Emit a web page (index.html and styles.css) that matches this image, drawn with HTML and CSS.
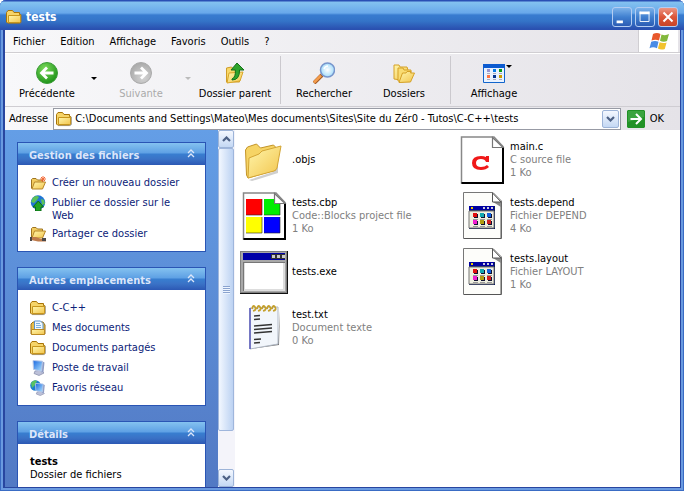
FILE: index.html
```html
<!DOCTYPE html>
<html lang="fr">
<head>
<meta charset="utf-8">
<title>tests</title>
<link rel="stylesheet" href="styles.css">
</head>
<body>
<svg class="defs" aria-hidden="true">
  <defs>
    <linearGradient id="gold" x1="0" y1="0" x2="1" y2="1"><stop offset="0" stop-color="#fff6ac"/><stop offset="1" stop-color="#f2c44c"/></linearGradient>
    <linearGradient id="screen" x1="0" y1="0" x2="1" y2="1"><stop offset="0" stop-color="#1565e0"/><stop offset="1" stop-color="#b4e6ff"/></linearGradient>
    <radialGradient id="green" cx=".4" cy=".3" r=".8"><stop offset="0" stop-color="#7cda5c"/><stop offset="1" stop-color="#128a10"/></radialGradient>
    <radialGradient id="grey" cx=".4" cy=".3" r=".8"><stop offset="0" stop-color="#d4d4d4"/><stop offset="1" stop-color="#a4a4a4"/></radialGradient>
    <radialGradient id="lens"><stop offset="0" stop-color="#fff"/><stop offset="1" stop-color="#a4dcfa"/></radialGradient>
    <symbol id="folder" viewBox="0 0 16 16">
      <path d="M2 14.6h12.4l1-1V6" fill="none" stroke="#777" stroke-opacity=".6"/>
      <path d="M.5 3.5 2 1.5h4.5L8 3.5h5.5v2h1.2V13l-1 1H1.5l-1-1z" fill="#f6d468" stroke="#a87408"/>
      <path d="M2.5 6.5h12v6l-1 1h-11z" fill="url(#gold)" stroke="#c8961c"/>
    </symbol>
    <symbol id="open" viewBox="0 0 16 16">
      <path d="M1.5 13.5v-9l1-1H6l1.5 1.5h5v2" fill="#f2cc60" stroke="#9e7420"/>
      <path d="m2 14 2.5-7h11l-3 7z" fill="url(#gold)" stroke="#b58528"/>
    </symbol>
    <symbol id="pc" viewBox="0 0 16 16">
      <path d="m5 11 6-1 3 3-5 2.500-5-2z" fill="#bcc0d8" stroke="#8388a6" stroke-width=".7"/>
      <path d="m3 1 9.500.5 2 1-1 9.500-2 .5z" fill="#8e9cc4"/>
      <path d="m3 .5 9.500.7-1 10-8-1.800z" fill="url(#screen)" stroke="#b8c8e8"/>
    </symbol>
    <symbol id="chevrons" viewBox="0 0 8 9"><path d="m1 4 3-3 3 3M1 8l3-3 3 3" fill="none" stroke="currentColor" stroke-width="1.3"/></symbol>
    <symbol id="chev" viewBox="0 0 9 6"><path d="M1 1 4.5 4.5 8 1" fill="none" stroke="#4d6185" stroke-width="2.2"/></symbol>
    <symbol id="arrow" viewBox="0 0 22 22">
      <circle cx="11" cy="11" r="10.5" stroke-width="1"/>
      <path d="M17.5 11H6M11 5.5 5.5 11l5.5 5.500" fill="none" stroke="#fff" stroke-width="2.8"/>
    </symbol>
    <symbol id="sheet" viewBox="0 0 48 48">
      <path d="M6 .5h29L43.500 9v37.500H5.500V.5z" fill="#fdfdfa" stroke="#777"/>
      <path d="M43 10v36.500H6" fill="none" stroke="#555"/>
      <path d="M35 1v9h8v5l-8-5z" fill="#8a8a8a"/>
      <path d="M34.500 1v9H43z" fill="#fff" stroke="#555"/>
      <path d="M11 14h26v23H11z" fill="#0a1b55"/><path d="M11 14h25v4H11z" fill="#0000a0"/><path d="M11 19h25v17H11z" fill="#efefdf" stroke="#777"/>
      <path d="M13 15h2v2h-2z" fill="#ec0"/><path d="M25 15h2v2h-2zm4 0h2v2h-2zm4 0h2v2h-2z" fill="#ccd"/>
      <path d="M16 22h4v4h-4zm7 0h4v4h-4zm7 0h4v4h-4zM16 29h4v4h-4zm7 0h4v4h-4zm7 0h4v4h-4z" fill="#101030"/>
      <path d="M15 21h4v4h-4z" fill="#e01010"/><path d="M22 21h4v4h-4z" fill="#10a8b0"/><path d="M29 21h4v4h-4z" fill="#1060e0"/>
      <path d="M15 28h4v4h-4z" fill="#f020d0"/><path d="M22 28h4v4h-4z" fill="#b09c10"/><path d="M29 28h4v4h-4z" fill="#d02020"/>
      <path d="M15 27.500h5m2 0h5m2 0h5M15 34.500h5m2 0h5m2 0h5" stroke="#999"/>
    </symbol>
    <symbol id="page" viewBox="0 0 48 48">
      <path d="M3.500 1H36l9 9.500V47H3.500z" fill="#fff" stroke="#888" stroke-width="1.500"/>
      <path d="M45 11v36H3.500" fill="none" stroke="#000" stroke-width="2"/>
      <path d="M34.500 1.500v10H45z" fill="#fff" stroke="#777" stroke-width="1.200"/>
    </symbol>
  </defs>
</svg>

<div class="window">
  <header class="titlebar">
    <svg class="i16"><use href="#folder"/></svg>
    <h1>tests</h1>
    <button class="winbtn" aria-label="Réduire"><svg viewBox="0 0 20 20"><path d="M4 14h7v3H4z" fill="#fff"/></svg></button>
    <button class="winbtn" aria-label="Agrandir"><svg viewBox="0 0 20 20"><path d="M4.500 4v11h10V4" fill="none" stroke="#fff"/><path d="M4 4h11v3H4z" fill="#fff"/></svg></button>
    <button class="winbtn close" aria-label="Fermer"><svg viewBox="0 0 20 20"><path d="m5 5 10 10M15 5 5 15" stroke="#fff" stroke-width="2.200"/></svg></button>
  </header>

  <nav class="menubar">
    <button>Fichier</button><button>Edition</button><button>Affichage</button><button>Favoris</button><button>Outils</button><button>?</button>
    <span class="flag"><svg viewBox="0 0 20 19">
      <path d="M4 2q4-2 7.500 0L10 8.500Q6.500 7 2.500 8.500z" fill="#e8582c"/>
      <path d="M12.500 2.500q4 1.500 7.500-.5l-2 7q-3.500 1.500-7-.3z" fill="#83b83c"/>
      <path d="M2.200 9.700q4-1.500 7.300 0L8 16.200q-4-1.700-7.500 0z" fill="#4a8be4"/>
      <path d="M10.600 10.200q3.600 1.500 7 .2l-1.800 6.500q-3.500 1.500-6.900-.3z" fill="#f2c22e"/>
    </svg></span>
  </nav>

  <div class="toolbar">
    <button class="tool"><svg class="i22"><use href="#arrow" fill="url(#green)" stroke="#3c9c38"/></svg>Précédente</button>
    <button class="drop" aria-label="Historique précédent"><i></i></button>
    <button class="tool off" disabled><svg class="i22"><use href="#arrow" fill="url(#grey)" stroke="#aaa" transform="rotate(180 11 11)"/></svg>Suivante</button>
    <button class="drop off" aria-label="Historique suivant" disabled><i></i></button>
    <button class="tool"><svg class="i22" viewBox="0 0 22 22">
      <path d="M2.500 20V6l5-1 2 2h6v13z" fill="#f8d868" stroke="#cf9d28"/>
      <path d="m3 21 2-10 14-1-3 9z" fill="url(#gold)" stroke="#d9a62a"/>
      <path d="M8 17q4-2 3.300-9H7L13 1l7 7h-4.500q.3 10-7.500 10z" fill="#2fa42c" stroke="#14701a"/>
    </svg>Dossier parent</button>
    <span class="sep"></span>
    <button class="tool wide"><svg class="i22" viewBox="0 0 22 22">
      <path d="m1 21 8-8" stroke="#a35c24" stroke-width="4"/><path d="m1 20.500 7-7" stroke="#f49c4c" stroke-width="2.500"/>
      <circle cx="14.500" cy="8" r="7" fill="url(#lens)" stroke="#7795cc" stroke-width="1.500"/><path d="M11 7q1-3 4-3" fill="none" stroke="#fff" stroke-width="1.500"/>
    </svg>Rechercher</button>
    <button class="tool wide"><svg class="i22" viewBox="0 0 22 22">
      <path d="M1 17V3h5l1 2h7l1 3-7 10z" fill="url(#gold)" stroke="#d5a127"/>
      <path d="M5 19V6h5l1 2h7v6l-8 6z" fill="#f9dc72" stroke="#d5a127"/>
      <path d="M6 20.500 9.500 11H13l1-1.500h4L17.500 11H21.500l-4 9z" fill="url(#gold)" stroke="#d5a127"/>
    </svg>Dossiers</button>
    <span class="sep"></span>
    <button class="tool wide view"><svg class="i22" viewBox="0 0 22 22">
      <path d="M.5 3.500h21v17H.5z" fill="#e9f2ff" stroke="#1165cc"/><path d="M0 2h22v4H0z" fill="#0c5bd0"/>
      <path d="M4 7h3v3H4z" fill="#9895cf"/><path d="M10 7h3v3h-3z" fill="#087be5"/><path d="M16 7h3v3h-3z" fill="#0c9914"/>
      <path d="M4 13h3v3H4z" fill="#ff7441"/><path d="M10 13h3v3h-3z" fill="#05338f"/><path d="M16 13h3v3h-3z" fill="#cf9b00"/>
      <path d="M4 11.500h3m3 0h3m3 0h3M4 17.500h3m3 0h3m3 0h3" stroke="#aab"/>
    </svg>Affichage<i></i></button>
  </div>

  <form class="address">
    <label for="addr">Adresse</label>
    <div class="combo">
      <svg class="i16"><use href="#folder"/></svg>
      <input id="addr" type="text" value="C:\Documents and Settings\Mateo\Mes documents\Sites\Site du Zér0 - Tutos\C-C++\tests">
      <button type="button" class="bluebtn" aria-label="Dérouler"><svg class="chev"><use href="#chev"/></svg></button>
    </div>
    <button type="button" class="go"><svg viewBox="0 0 18 18"><path d="M0 1 1 0h16l1 1v16l-1 1H1l-1-1z" fill="#219126"/><path d="M1 1h16v6L1 12z" fill="#55b858" opacity=".5"/><path d="M3.500 9H14M9 4l5 5-5 5" fill="none" stroke="#fff" stroke-width="2"/></svg>OK</button>
  </form>

  <div class="body">
    <aside class="side">
      <section class="panel">
        <h2>Gestion des fichiers<svg class="chevrons"><use href="#chevrons"/></svg></h2>
        <ul>
          <li><svg class="i16" viewBox="0 0 16 16"><use href="#open"/><path d="M13 1v6m-3-3h6m-5-2 4 4m0-4-4 4" stroke="#f26a38"/></svg><a href="#">Créer un nouveau dossier</a></li>
          <li><svg class="i16" viewBox="0 0 16 16"><circle cx="8" cy="7.500" r="7.200" fill="#2075d4"/><path d="M3 2.500Q7 0 9 2L7 5 4 8 1 7zM11 4l3 1 1 4-3 1z" fill="#5cc258"/><path d="M5.500 16v-4H3l5.300-6 5.200 6H11v4z" fill="#22a422" stroke="#096c18"/></svg><a href="#">Publier ce dossier sur le Web</a></li>
          <li><svg class="i16" viewBox="0 0 16 16"><use href="#open" y="-2"/><path d="M1 11h5l5 2h5v2.500H8L1 14z" fill="#be7a4a"/><path d="M0 11h2v4H0zm12 1h4v3h-4z" fill="#4c4847"/></svg><a href="#">Partager ce dossier</a></li>
        </ul>
      </section>
      <section class="panel">
        <h2>Autres emplacements<svg class="chevrons"><use href="#chevrons"/></svg></h2>
        <ul>
          <li><svg class="i16"><use href="#folder"/></svg><a href="#">C-C++</a></li>
          <li><svg class="i16" viewBox="0 0 16 16"><path d="M1 14V4l2-2h10l2 3v9z" fill="#e8bf4a" stroke="#9b711c"/><path d="M4.500 1h6L13 3.500V10H4.500z" fill="#eef7ff" stroke="#5892ce"/><path d="M6 3.500h4M6 5.500h5M6 7.500h5" stroke="#7bb0dd"/><path d="M1.500 9.500h13v5h-13z" fill="url(#gold)" stroke="#bb8a24"/></svg><a href="#">Mes documents</a></li>
          <li><svg class="i16"><use href="#folder"/></svg><a href="#">Documents partagés</a></li>
          <li><svg class="i16"><use href="#pc"/></svg><a href="#">Poste de travail</a></li>
          <li><svg class="i16" viewBox="0 0 16 16"><circle cx="5.500" cy="5.500" r="5.300" fill="#1b7ed0"/><path d="M1 3q3-4 6-2L5 5 2 8z" fill="#58c263"/><use href="#pc" x="3" y="3" width="13" height="13"/></svg><a href="#">Favoris réseau</a></li>
        </ul>
      </section>
      <section class="panel last">
        <h2>Détails<svg class="chevrons"><use href="#chevrons"/></svg></h2>
        <div class="details"><strong>tests</strong><span>Dossier de fichiers</span></div>
      </section>
    </aside>
    <div class="scroll">
      <button class="bluebtn" aria-label="Monter"><svg class="chev up"><use href="#chev"/></svg></button>
      <div class="thumb"><span></span></div>
      <button class="bluebtn" aria-label="Descendre"><svg class="chev"><use href="#chev"/></svg></button>
    </div>
    <main class="files">
      <article><svg class="i48" viewBox="0 0 48 48">
        <path d="m9 44 24-8 5-26v27L12 45z" fill="#888" opacity=".4"/>
        <path d="M6.500 39 5.500 14l2-3 9-3 4 4 13-3 2 2v23L8 42z" fill="#f6d465" stroke="#c39428"/>
        <path d="m8 42 1-20 10-4 3-3 19-5-4 22q-.5 2-3 3z" fill="url(#gold)" stroke="#d3a534"/>
      </svg><div><b>.objs</b></div></article>
      <article><svg class="i48"><use href="#page"/>
        <path d="M6 7h16v16H6z" fill="#f00"/><path d="M24 7h10v5h6v11H24z" fill="#0e0"/><path d="M6 25h16v16H6z" fill="#ff0"/><path d="M24 25h16v16H24z" fill="#00f"/>
        <path d="M6 23h16V7M24 23h16V12M6 41h16V25M24 41h16V25" fill="none" stroke="#222" stroke-opacity=".6"/>
      </svg><div><b>tests.cbp</b><span>Code::Blocks project file</span><span>1 Ko</span></div></article>
      <article><svg class="i48" viewBox="0 0 48 48">
        <path d="M0 3h48v43H0z" fill="#111"/><path d="M0 3h47v42H0z" fill="#808080"/><path d="M1 4h45v40H1z" fill="#a8a8a8"/>
        <path d="M3 5h42v7H3z" fill="#0000a8"/><path d="M31 6h14v5H31z" fill="#333"/><path d="M32 7h3v3h-3zm5 0h3v3h-3zm5 0h3v3h-3z" fill="#ccc"/>
        <path d="M3 14h42v29H3z" fill="#777"/><path d="M4 15h41v28H4z" fill="#ddd"/><path d="M5 15h38v26H5z" fill="#fff"/>
      </svg><div><b>tests.exe</b></div></article>
      <article><svg class="i48" viewBox="0 0 48 48">
        <path d="m11 45 28-4 1-35-2 33z" fill="#777"/><path d="m10 4 28-1v37l-28 5z" fill="#f2f6fb" stroke="#b0b8c4"/>
        <path d="M10 4v41" stroke="#5556b8" stroke-width="1.500"/>
        <path d="M12 5q1-5 3-2t-2 4M17 5q1-5 3-2t-2 4M22 5q1-5 3-2t-2 4M27 5q1-5 3-2t-2 4M32 5q1-5 3-2t-2 4" fill="none" stroke="#c5a02c" stroke-width="1.700"/>
        <path d="m14 12 6-.5m-6 4 6-.5m-6 7 18-1.500m-18 5 18-1.500m-18 5 18-1.500m-18 8 7-.5m-7 4 6-.5" stroke="#333" stroke-width="1.300"/>
      </svg><div><b>test.txt</b><span>Document texte</span><span>0 Ko</span></div></article>
      <article><svg class="i48" viewBox="0 0 48 48"><use href="#page"/>
        <path d="M31 20v6h-3q-1-3-5-3-5 0-5 4t5 4q4 0 6-2l2 2q-3 3-8 3-9 0-9-7t9-7q3 0 5 1v-1z" fill="#f01818"/>
      </svg><div><b>main.c</b><span>C source file</span><span>1 Ko</span></div></article>
      <article><svg class="i48"><use href="#sheet"/></svg><div><b>tests.depend</b><span>Fichier DEPEND</span><span>4 Ko</span></div></article>
      <article><svg class="i48"><use href="#sheet"/></svg><div><b>tests.layout</b><span>Fichier LAYOUT</span><span>1 Ko</span></div></article>
    </main>
  </div>
</div>
</body>
</html>
```
FILE: styles.css
```css
* { box-sizing: border-box; }
body {
  margin: 0;
  background: #fff;
  color: #000;
  font: 11px/13px "DejaVu Sans Condensed", "Noto Sans", sans-serif;
}
button, input { font: inherit; color: inherit; border: 0; padding: 0; margin: 0; background: none; }
svg { display: block; flex: none; }
.defs { position: absolute; width: 0; height: 0; }
.i16 { width: 16px; height: 16px; }
.i22 { width: 22px; height: 22px; }
.i48 { width: 48px; height: 48px; }

.window {
  display: flex;
  flex-direction: column;
  height: 100vh;
  padding: 0 4px 4px 5px;
  border-radius: 6px 6px 0 0;
  background: #2846a0;
  box-shadow: inset 1px 0 #3a6cc4, inset -1px -1px #3a6cc4, inset 3px 0 #6a9ae0, inset -3px -3px #6a9ae0;
  overflow: hidden;
}

.titlebar {
  display: flex;
  align-items: center;
  gap: 2px;
  height: 30px;
  margin: 0 -4px 0 -5px;
  padding: 3px 6px 0;
  background: linear-gradient(#2a4fb4 0 1px, #84c2f0 2px, #68a8ea 13px, #387cd0 15px, #3474c8 21px, #2a50b0 29px);
}
.titlebar h1 {
  flex: 1;
  margin: 0 0 0 2px;
  color: #fff;
  font: bold 12px/16px "DejaVu Sans Condensed", sans-serif;
}
.winbtn {
  width: 20px;
  height: 20px;
  border: 1px solid #b4cdf2;
  border-radius: 3px;
  background: linear-gradient(#7cb2ea, #4080d0 50%, #2c5cb4);
}
.winbtn + .winbtn { margin-left: 1px; }
.winbtn svg { width: 18px; height: 18px; }
.winbtn.close { background: linear-gradient(#ec9684, #dc5638 50%, #c84428); }

.menubar, .toolbar, .address { display: flex; background: linear-gradient(90deg, #f8f8fa, #e5e3e8); }
.menubar { gap: 1px; height: 23px; padding: 0 2px 0 1px; align-items: stretch; border-bottom: 1px solid #d0ced2; }
.menubar button { padding: 0 7px; }
.flag { display: grid; place-items: center; width: 40px; margin-left: auto; border-left: 1px solid #d0ced2; background: #fff; }
.flag svg { width: 20px; height: 19px; }

.toolbar { height: 54px; padding: 8px 4px 5px 3px; border-top: 1px solid #fff; border-bottom: 1px solid #cfcdd2; align-items: flex-start; }
.tool {
  position: relative;
  display: flex;
  flex-direction: column;
  align-items: center;
  gap: 3px;
  width: 78px;
  white-space: nowrap;
}
.tool.wide { width: 80px; }
.drop { width: 16px; height: 32px; display: grid; place-items: center; }
.toolbar i { border: 3px solid transparent; border-top-color: #000; border-bottom: 0; }
.off { color: #aaa; }
.toolbar .off i { border-top-color: #bbb; }
.sep { width: 1px; height: 48px; margin: -6px 3px 0 6px; background: #cbc9ce; }
.view i { position: absolute; left: 52px; top: 3px; }

.address { height: 23px; align-items: center; padding: 0 16px 0 4px; }
.combo {
  display: flex;
  flex: 1;
  align-items: center;
  gap: 3px;
  height: 22px;
  margin: 0 6px 0 5px;
  padding: 1px 1px 1px 2px;
  border: 1px solid #979aa4;
  background: #fff;
}
.combo input { flex: 1; min-width: 0; height: 18px; outline: 0; }
.bluebtn {
  display: grid;
  place-items: center;
  width: 17px;
  height: 18px;
  flex: none;
  border: 1px solid #9db4d8;
  border-radius: 2px;
  background: linear-gradient(#f4f8ff, #c4d8f4);
}
.chev { width: 9px; height: 6px; }
.up { transform: rotate(180deg); }
.go { display: flex; align-items: center; gap: 5px; }
.go svg { width: 18px; height: 18px; }

.body { display: flex; flex: 1; min-height: 0; background: #fff; }
.side {
  width: 213px;
  padding: 12px 12px 0;
  background: linear-gradient(#649ee6, #5279c4);
  overflow: hidden;
}
.panel { margin-bottom: 15px; border: 1px solid #2a55b4; background: #fff; }
.panel h2 {
  display: flex;
  justify-content: space-between;
  align-items: center;
  height: 22px;
  margin: 0;
  padding: 2px 10px 0 11px;
  background: linear-gradient(#84c2f0, #5ea0e4 10px, #387ed0 11px, #3a72c6 16px, #2c58b4);
  color: #dce6fa;
  font-size: 11px;
}
.chevrons { width: 8px; height: 9px; margin-bottom: 3px; }
.panel ul { display: grid; gap: 4px; margin: 0; padding: 10px 12px 9px; list-style: none; }
.panel li { display: flex; gap: 6px; min-height: 16px; }
.panel a { padding-top: 1px; color: #0b2278; text-decoration: none; }
.details { display: grid; height: 60px; align-content: start; padding: 11px 12px; }

.scroll { display: flex; flex-direction: column; width: 17px; padding: 0 1px 0 0; background: #f4f4fa; }
.scroll .bluebtn { width: 16px; }
.thumb {
  display: grid;
  place-items: center;
  height: 283px;
  border: 1px solid #9fb6dc;
  border-radius: 2px;
  background: linear-gradient(90deg, #f2f7ff, #bcd2f2);
}
.thumb span { width: 7px; height: 8px; background: repeating-linear-gradient(#8aa3cf 0 1px, #eef5ff 1px 2px); }
.scroll .bluebtn:last-child { margin-top: auto; }

.files {
  display: grid;
  flex: 1;
  grid-template-rows: repeat(4, 48px);
  grid-auto-flow: column;
  grid-auto-columns: 218px;
  align-content: start;
  gap: 8px 0;
  padding: 6px 0 0 5px;
  overflow: hidden;
}
.files article { display: flex; align-items: center; gap: 4px; white-space: nowrap; }
.files article div { padding-bottom: 2px; }
.files b, .files span { display: block; font-weight: normal; }
.files span { color: #808080; }
```
